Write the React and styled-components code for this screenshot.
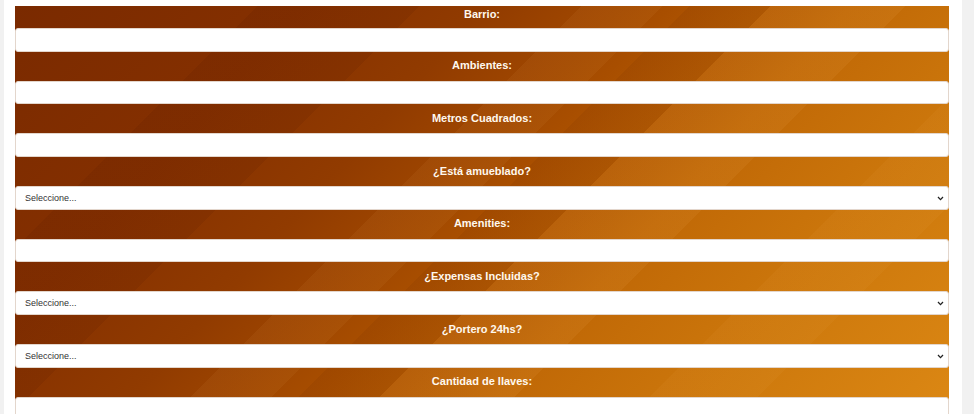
import React from 'react';
import styled, {createGlobalStyle} from 'styled-components';

const GlobalStyle = createGlobalStyle`
    body {
        margin: 0;
        background: #f1f1f1;
        font-family: "Liberation Sans", Arial, sans-serif;
    }
`;

const Page = styled.div`
    margin-left: 4px;
    width: 958px;
    box-sizing: border-box;
    padding: 6px 13px 0 11px;
    background: #ffffff;
    min-height: 414px;
`;

const Form = styled.form`
    display: flex;
    flex-direction: column;
    background:
        linear-gradient(135deg,
            transparent 0 42%,
            rgba(255, 190, 110, 0.06) 42% 48%,
            transparent 48% 56%,
            rgba(255, 190, 110, 0.08) 56% 66%,
            transparent 66% 76%,
            rgba(255, 190, 110, 0.05) 76% 84%,
            transparent 84%),
        linear-gradient(135deg,
            transparent 0 18%,
            rgba(70, 15, 0, 0.10) 18% 30%,
            transparent 30% 50%,
            rgba(70, 15, 0, 0.07) 50% 56%,
            transparent 56%),
        linear-gradient(132deg, #7a2a00 0%, #853000 22%, #913b00 36%, #a84e00 50%, #c06806 64%, #cd780c 80%, #dc8814 100%);
`;

const Label = styled.label`
    display: flex;
    align-items: center;
    justify-content: center;
    box-sizing: border-box;
    height: ${props => props.$clipped ? '22px' : '29px'};
    padding-bottom: ${props => props.$clipped ? '7px' : '2px'};
    color: #fff8ee;
    font-size: 11px;
    font-weight: bold;
`;

const Field = styled.input`
    display: block;
    box-sizing: border-box;
    width: 100%;
    height: 23.7px;
    margin: 0;
    padding: 0 9px;
    border: 1px solid #e3d6cc;
    border-radius: 3px;
    background: #ffffff;
    font-family: inherit;
    font-size: 9px;
    color: #333;
    outline: none;
`;

const SelectBox = styled.div`
    position: relative;
    height: 23.7px;
`;

const Select = styled.select`
    display: block;
    box-sizing: border-box;
    width: 100%;
    height: 100%;
    margin: 0;
    padding: 0 9px;
    border: 1px solid #e3d6cc;
    border-radius: 3px;
    background: #ffffff;
    appearance: none;
    font-family: inherit;
    font-size: 9px;
    color: #333;
    outline: none;
`;

const Chevron = styled.svg`
    position: absolute;
    right: 5px;
    top: 50%;
    margin-top: -2px;
    width: 7px;
    height: 5px;
    pointer-events: none;
`;

const fields = [
    {label: 'Barrio:'},
    {label: 'Ambientes:'},
    {label: 'Metros Cuadrados:'},
    {label: '¿Está amueblado?', select: true},
    {label: 'Amenities:'},
    {label: '¿Expensas Incluidas?', select: true},
    {label: '¿Portero 24hs?', select: true},
    {label: 'Cantidad de llaves:'},
];

function Dropdown() {
    return (
        <SelectBox>
            <Select defaultValue="">
                <option value="">Seleccione...</option>
                <option value="si">Sí</option>
                <option value="no">No</option>
            </Select>
            <Chevron viewBox="0 0 7 5">
                <path d="M1 1 L3.5 3.6 L6 1" fill="none" stroke="#222" strokeWidth="1.3"/>
            </Chevron>
        </SelectBox>
    );
}

export default function App() {
    return (
        <>
            <GlobalStyle/>
            <Page>
                <Form>
                    {fields.map((f, i) => (
                        <React.Fragment key={f.label}>
                            <Label $clipped={i === 0}>{f.label}</Label>
                            {f.select ? <Dropdown/> : <Field type="text"/>}
                        </React.Fragment>
                    ))}
                </Form>
            </Page>
        </>
    );
}
